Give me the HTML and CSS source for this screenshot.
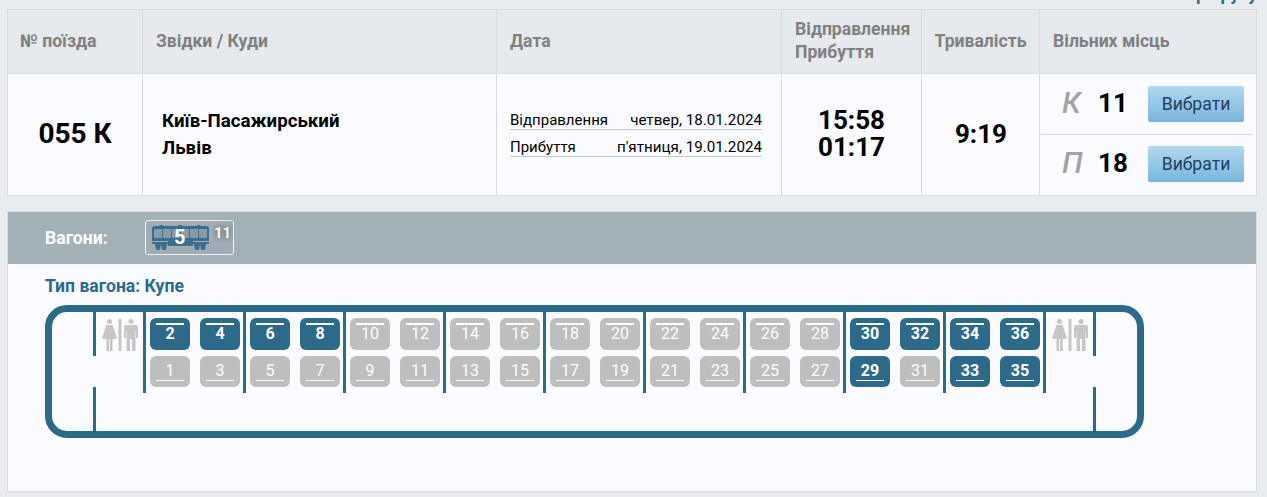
FILE: index.html
```html
<!DOCTYPE html>
<html lang="uk">
<head>
<meta charset="utf-8">
<title>Вибір місць</title>
<link rel="stylesheet" href="styles.css">
</head>
<body>
<div class="top-link"><span>маршруту</span></div>
<section class="trains">
  <div class="row head">
    <div class="cell c-num">№ поїзда</div>
    <div class="cell c-route">Звідки / Куди</div>
    <div class="cell c-date">Дата</div>
    <div class="cell c-time">Відправлення<br>Прибуття</div>
    <div class="cell c-dur">Тривалість</div>
    <div class="cell c-free">Вільних місць</div>
  </div>
  <div class="row data">
    <div class="cell c-num number">055 К</div>
    <div class="cell c-route route"><div>Київ-Пасажирський</div><div>Львів</div></div>
    <div class="cell c-date dates">
      <div class="date-line"><span class="date-label">Відправлення</span><span>четвер, 18.01.2024</span></div>
      <div class="date-line"><span class="date-label">Прибуття</span><span>п'ятниця, 19.01.2024</span></div>
    </div>
    <div class="cell c-time times">15:58<br>01:17</div>
    <div class="cell c-dur duration">9:19</div>
    <div class="cell c-free places">
      <div class="place"><i class="kind">К</i><b class="count">11</b><button class="pick">Вибрати</button></div>
      <div class="place"><i class="kind">П</i><b class="count">18</b><button class="pick">Вибрати</button></div>
    </div>
  </div>
</section>
<section class="panel">
  <div class="bar">
    <span class="bar-label">Вагони:</span>
    <div class="car-btn">
      <svg class="car-icon" viewBox="0 0 57 25" width="57" height="25" aria-hidden="true">
        <g fill="#3a6d8f">
          <path fill-rule="evenodd" d="M3 1H8V0H11V1H26V0H30V1H45V0H48V1H54Q57 1 57 4V16H0V4Q0 1 3 1ZM2 4V13H10V4ZM11 4V13H19V4ZM20 4V13H28V4ZM29 4V13H37V4ZM38 4V13H46V4ZM47 4V13H55V4Z"/>
          <rect x="0" y="17" width="57" height="2"/>
          <rect x="16" y="16" width="25" height="5"/>
          <rect x="3" y="19" width="12" height="2"/>
          <rect x="42" y="19" width="12" height="2"/>
          <circle cx="6" cy="22.500" r="2.500"/><circle cx="12" cy="22.500" r="2.500"/>
          <circle cx="45" cy="22.500" r="2.500"/><circle cx="51" cy="22.500" r="2.500"/>
        </g>
        <g fill="#3a6d8f" opacity=".25">
          <rect x="2" y="4" width="8" height="9"/><rect x="11" y="4" width="8" height="9"/>
          <rect x="20" y="4" width="8" height="9"/><rect x="29" y="4" width="8" height="9"/>
          <rect x="38" y="4" width="8" height="9"/><rect x="47" y="4" width="8" height="9"/>
        </g>
      </svg>
      <span class="car-no">5</span>
      <span class="car-free">11</span>
    </div>
  </div>
  <div class="car-type">Тип вагона: Купе</div>
  <div class="wagon">
    <div class="vestibule"></div>
    <div class="door"><span></span><span></span></div>
    <div class="wc">
      <svg viewBox="0 0 36 32" width="36" height="32" aria-hidden="true"><use href="#wc"/></svg>
    </div>
    <div class="comp"><span class="seat on">2</span><span class="seat on">4</span><span class="seat off low">1</span><span class="seat off low">3</span></div>
    <div class="comp"><span class="seat on">6</span><span class="seat on">8</span><span class="seat off low">5</span><span class="seat off low">7</span></div>
    <div class="comp"><span class="seat off">10</span><span class="seat off">12</span><span class="seat off low">9</span><span class="seat off low">11</span></div>
    <div class="comp"><span class="seat off">14</span><span class="seat off">16</span><span class="seat off low">13</span><span class="seat off low">15</span></div>
    <div class="comp"><span class="seat off">18</span><span class="seat off">20</span><span class="seat off low">17</span><span class="seat off low">19</span></div>
    <div class="comp"><span class="seat off">22</span><span class="seat off">24</span><span class="seat off low">21</span><span class="seat off low">23</span></div>
    <div class="comp"><span class="seat off">26</span><span class="seat off">28</span><span class="seat off low">25</span><span class="seat off low">27</span></div>
    <div class="comp"><span class="seat on">30</span><span class="seat on">32</span><span class="seat on low">29</span><span class="seat off low">31</span></div>
    <div class="comp"><span class="seat on">34</span><span class="seat on">36</span><span class="seat on low">33</span><span class="seat on low">35</span></div>
    <div class="comp wc-end">
      <svg viewBox="0 0 36 32" width="36" height="32" aria-hidden="true">
        <g id="wc" fill="#c6c6c6">
          <circle cx="7.500" cy="2.500" r="2.500"/>
          <path d="M4.500 6H10.500L15 19L13.500 20H10.500V32H8V20H7V32H4.500V20H1.500L0 19Z"/>
          <rect x="16.500" y="0" width="3" height="32"/>
          <circle cx="29" cy="2.500" r="2.500"/>
          <path d="M24 6H34Q36 6 36 8V19H34V12H33.500V32H30V20H28V32H24.500V12H24V19H22V8Q22 6 24 6Z"/>
        </g>
      </svg>
    </div>
    <div class="door"><span></span><span></span></div>
    <div class="vestibule"></div>
  </div>
</section>
</body>
</html>
```
FILE: styles.css
```css
* { box-sizing: border-box; }
html, body { height: 100%; }
body {
  margin: 0;
  padding: 0 10px 0 7px;
  background: #e9edf0;
  font-family: Roboto, "Noto Sans", sans-serif;
  color: #000;
  overflow: hidden;
}
.top-link {
  height: 9px;
  overflow: hidden;
  text-align: right;
  color: #2c6a8c;
  font-size: 17.6px;
  font-weight: 700;
}
.top-link span { display: block; line-height: 18px; margin-top: -15px; }
.trains { border: 1px solid #d8dcdf; background: #fafcff; }
.row { display: grid; grid-template-columns: 134px 354px 285px 140px 118px 1fr; }
.cell { border-left: 1px solid #d8dcdf; }
.cell:first-child { border-left: 0; }
.head { height: 64px; background: #e6e9ed; border-bottom: 1px solid #d8dcdf; }
.head .cell {
  display: flex;
  align-items: center;
  padding: 0 0 0 13px;
  font-size: 17.6px;
  line-height: 23px;
  font-weight: 700;
  color: #808080;
}
.head .c-num { padding-left: 12px; }
.head .c-time { padding-bottom: 2px; }
.head .c-dur { justify-content: center; padding-left: 0; }
.data { height: 121px; }
.data .cell { display: flex; align-items: center; justify-content: center; }
.number { font-size: 28px; font-weight: 700; padding-bottom: 2px; }
.data .route {
  display: block;
  padding: 34px 0 0 19px;
  font-size: 18.700px;
  font-weight: 700;
  line-height: 27px;
}
.data .dates { display: block; padding: 35px 19px 0 13px; }
.date-line {
  display: flex;
  justify-content: space-between;
  height: 21px;
  margin-bottom: 6px;
  border-bottom: 1px solid #c4c8cc;
  font-size: 15.200px;
  line-height: 22px;
}
.date-label { font-size: 15px; }
.data .times { padding-bottom: 2px; font-size: 26px; font-weight: 700; line-height: 27px; text-align: center; }
.data .duration { padding: 0 0 2px 1px; font-size: 26px; font-weight: 700; }
.data .places { display: block; }
.place {
  display: flex;
  align-items: center;
  height: 58px;
  margin-right: 2px;
  margin-left: 1px;
  padding-left: 21px;
}
.place:first-child { height: 61px; border-bottom: 1px solid #d8dcdf; }
.kind { width: 24px; margin-bottom: 4px; font-size: 30px; font-weight: 500; color: #a3a3a3; }
.count { width: 62px; margin-bottom: 2px; padding-right: 8px; text-align: center; font-size: 26px; font-weight: 700; }
.pick {
  width: 96px;
  height: 36px;
  border: 0;
  border-radius: 2px;
  background: linear-gradient(#b1d9f1, #79b5dc);
  color: #243f5c;
  font: 400 17.6px Roboto, sans-serif;
  padding: 0;
}
.panel {
  margin-top: 15px;
  height: 282px;
  border: 1px solid #d8dcdf;
  border-bottom: 2px solid #dde1e4;
  background: #fafcff;
}
.bar {
  display: flex;
  align-items: center;
  height: 52px;
  padding-left: 37px;
  background: #a2b0b8;
}
.bar-label { width: 100px; color: #fff; font-size: 17.6px; font-weight: 700; }
.car-btn {
  position: relative;
  width: 89px;
  height: 35px;
  padding: 4px 0 0 6px;
  margin-top: -1px;
  border: 1px solid #eef2f4;
  border-radius: 3px;
  background: #a0adb5;
}
.car-icon { display: block; }
.car-no {
  position: absolute;
  left: 28px;
  top: 4px;
  color: #fff;
  font-size: 20px;
  font-weight: 700;
}
.car-free {
  position: absolute;
  left: 68px;
  top: 3px;
  color: #fff;
  font-size: 15px;
  font-weight: 700;
  text-shadow: 0 0 5px #444;
}
.car-type {
  padding: 12px 0 0 37px;
  height: 41px;
  color: #2c6a8c;
  font-size: 17.6px;
  font-weight: 700;
}
.wagon {
  display: flex;
  width: 1099px;
  height: 133px;
  margin-left: 37px;
  border: 7px solid #2c6a8c;
  border-radius: 22px;
}
.vestibule { width: 41px; }
.door {
  display: flex;
  flex-direction: column;
  justify-content: space-between;
  width: 3px;
}
.door span { display: block; height: 44px; background: #2c6a8c; }
.wc { width: 47px; padding: 7px 0 0 6px; }
.wc svg, .comp svg { display: block; filter: blur(.5px); }
.comp {
  display: grid;
  grid-template-columns: 40px 40px;
  grid-template-rows: 32px 31px;
  column-gap: 10px;
  row-gap: 6px;
  align-content: start;
  width: 100px;
  height: 81px;
  padding: 6px 3px 0 4px;
  border-left: 3px solid #2c6a8c;
}
.comp.wc-end { display: block; width: 50px; padding: 7px 0 0 6px; }
.seat {
  position: relative;
  border-radius: 6px;
  color: #fff;
  font-size: 16px;
  line-height: 32px;
  text-align: center;
}
.seat::before {
  content: "";
  position: absolute;
  left: 6px;
  right: 6px;
  top: 5px;
  height: 2px;
  background: #fff;
}
.seat.low { line-height: 29px; }
.seat.low::before { top: auto; bottom: 6px; height: 1px; }
.seat.on { background: #2c6a8c; font-weight: 700; }
.seat.off { background: #bebebe; font-weight: 400; }
```
